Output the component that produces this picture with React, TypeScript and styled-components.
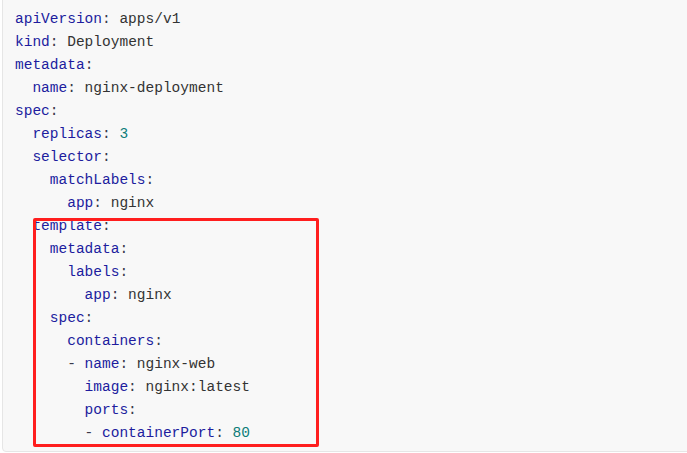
import { createGlobalStyle, styled } from "styled-components";

type Part = { t: string; k?: "key" | "val" | "num" | "punct" };
type Line = { indent: number; parts: Part[] };

const line = (indent: number, ...parts: Part[]): Line => ({ indent, parts });
const key = (t: string): Part => ({ t, k: "key" });
const val = (t: string): Part => ({ t, k: "val" });
const num = (t: string): Part => ({ t, k: "num" });
const punct = (t: string): Part => ({ t, k: "punct" });

const topLines: Line[] = [
  line(0, key("apiVersion"), punct(": "), val("apps/v1")),
  line(0, key("kind"), punct(": "), val("Deployment")),
  line(0, key("metadata"), punct(":")),
  line(2, key("name"), punct(": "), val("nginx-deployment")),
  line(0, key("spec"), punct(":")),
  line(2, key("replicas"), punct(": "), num("3")),
  line(2, key("selector"), punct(":")),
  line(4, key("matchLabels"), punct(":")),
  line(6, key("app"), punct(": "), val("nginx")),
];

const templateLines: Line[] = [
  line(2, key("template"), punct(":")),
  line(4, key("metadata"), punct(":")),
  line(6, key("labels"), punct(":")),
  line(8, key("app"), punct(": "), val("nginx")),
  line(4, key("spec"), punct(":")),
  line(6, key("containers"), punct(":")),
  line(6, punct("- "), key("name"), punct(": "), val("nginx-web")),
  line(8, key("image"), punct(": "), val("nginx:latest")),
  line(8, key("ports"), punct(":")),
  line(8, punct("- "), key("containerPort"), punct(": "), num("80")),
];

const GlobalStyle = createGlobalStyle`
  html, body {
    margin: 0;
    padding: 0;
    background: #ffffff;
    overflow: hidden;
  }
`;

const Page = styled.div`
  width: 687px;
  height: 453px;
  overflow: hidden;
`;

const CodeBlock = styled.pre`
  box-sizing: border-box;
  margin: -4px 0 0 2px;
  width: 700px;
  padding: 11px 0 6px 12px;
  background: #f8f8f8;
  border: 1px solid #e6e6e6;
  border-radius: 4px;
  font-family: "Liberation Mono", "DejaVu Sans Mono", monospace;
  font-size: 14.5px;
  line-height: 23px;
  color: #383a42;
`;

const Row = styled.div<{ $indent: number }>`
  white-space: pre;
  padding-left: ${(p) => p.$indent * 8.7}px;
  height: 23px;
`;

const Token = styled.span<{ $kind?: Part["k"] }>`
  color: ${(p) =>
    p.$kind === "key"
      ? "#201c9e"
      : p.$kind === "num"
        ? "#0d7d78"
        : p.$kind === "punct"
          ? "#3a3a4a"
          : "#333333"};
`;

const Highlight = styled.div`
  position: relative;

  &::after {
    content: "";
    position: absolute;
    top: 3px;
    bottom: -2px;
    left: 18px;
    width: 286px;
    border: 3px solid #ff1e1e;
    border-radius: 2px;
    box-sizing: border-box;
    pointer-events: none;
  }
`;

const renderLines = (lines: Line[]) =>
  lines.map((l, i) => (
    <Row key={i} $indent={l.indent}>
      {l.parts.map((p, j) => (
        <Token key={j} $kind={p.k}>
          {p.t}
        </Token>
      ))}
    </Row>
  ));

const App = () => {
  return (
    <Page>
      <GlobalStyle />
      <CodeBlock>
        {renderLines(topLines)}
        <Highlight>{renderLines(templateLines)}</Highlight>
      </CodeBlock>
    </Page>
  );
};

export default App;
